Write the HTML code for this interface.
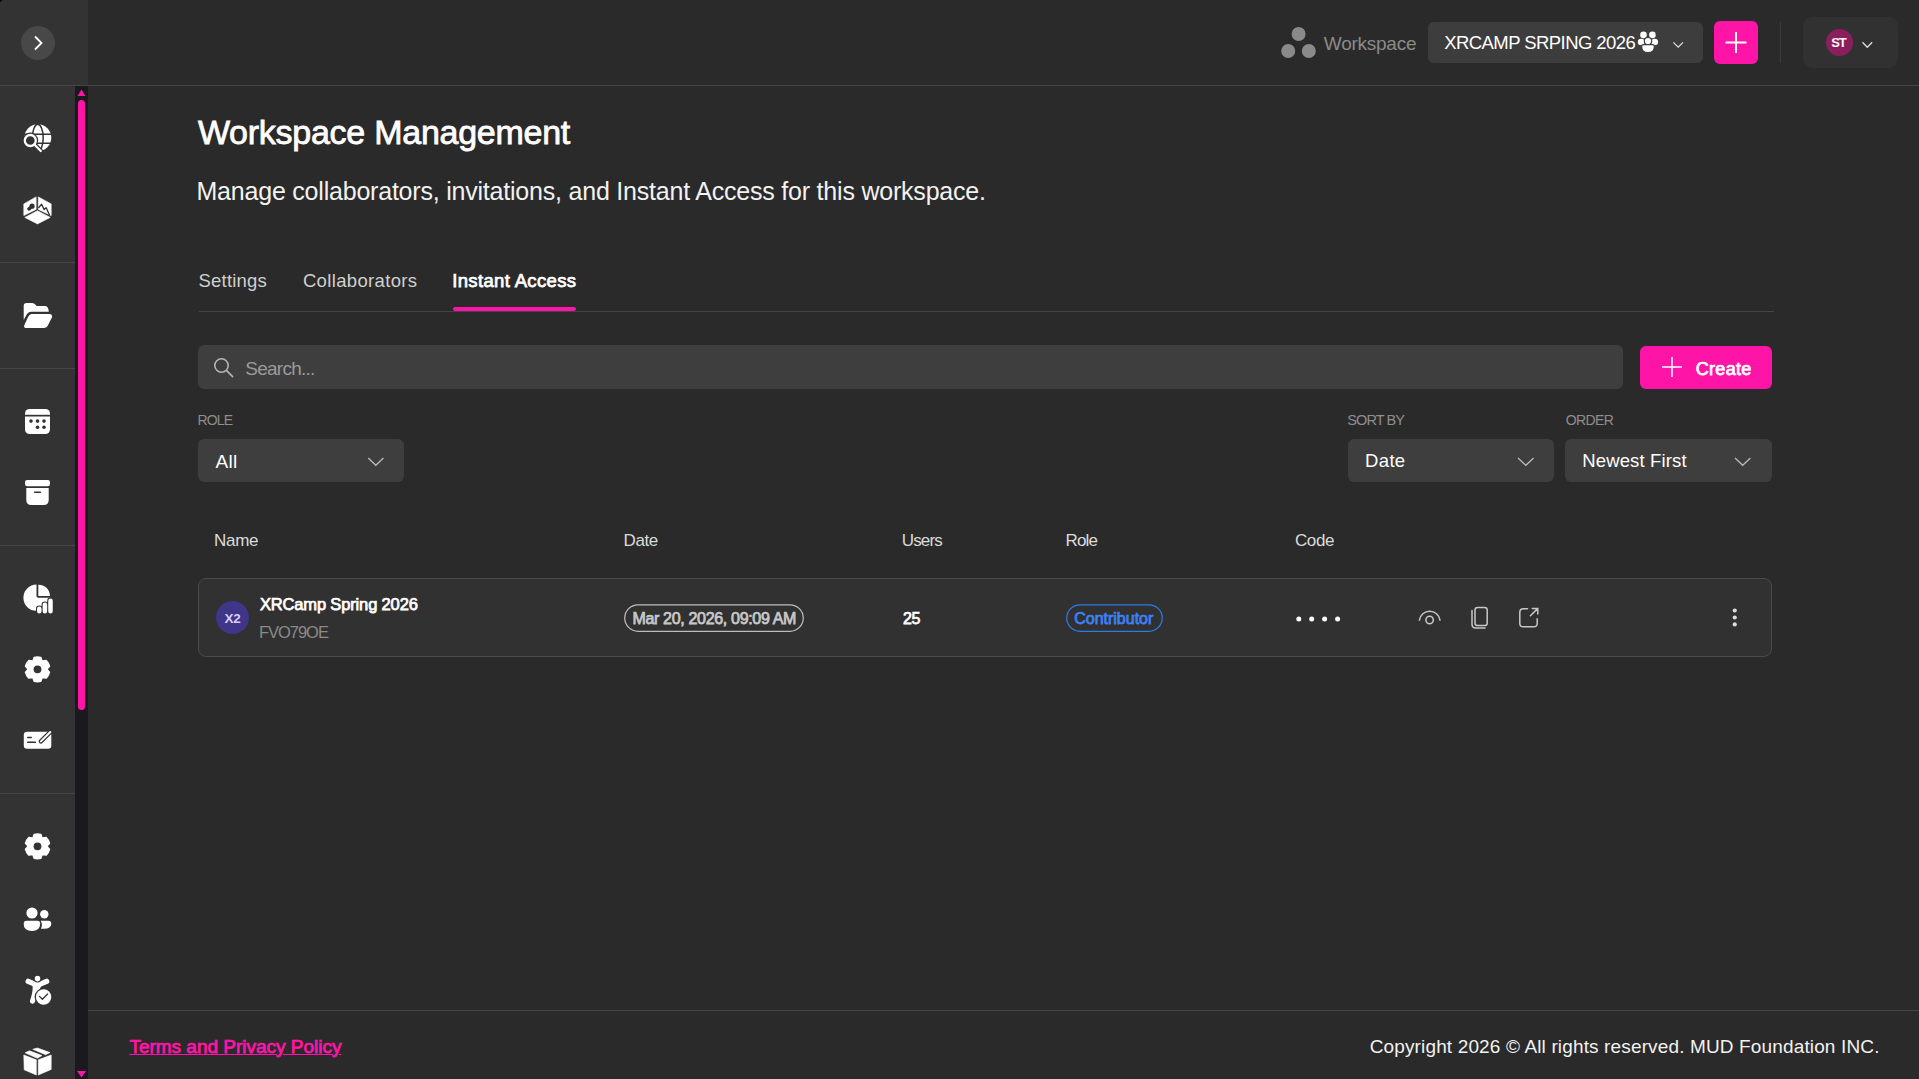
<!DOCTYPE html>
<html><head><meta charset="utf-8">
<style>
*{margin:0;padding:0;box-sizing:border-box}
html,body{width:1919px;height:1079px;overflow:hidden;background:#2a2a2a;font-family:"Liberation Sans",sans-serif;color:#fff}
.a{position:absolute}
.t{position:absolute;white-space:nowrap;line-height:1}
.b{font-weight:700}
</style></head><body>
<!-- sidebar -->
<div class="a" style="left:0;top:0;width:75px;height:1079px;background:#333"></div>
<div class="a" style="left:0;top:0;width:88px;height:85px;background:#333"></div>
<div class="a" style="left:0;top:85px;width:1919px;height:1px;background:#444"></div>
<div class="a" style="left:75px;top:86px;width:13px;height:993px;background:#19191e"></div>
<div class="a" style="left:78px;top:100px;width:7px;height:610px;border-radius:4px;background:#ff14a8"></div>
<svg class="a" style="left:75px;top:86px" width="13" height="993" viewBox="0 0 13 993">
 <path d="M6.5 3.5 L10.5 10 L2.5 10 Z" fill="#ff14a8"/>
 <path d="M2 985 L11 985 L6.5 991.5 Z" fill="#ff14a8"/>
</svg>
<div class="a" style="left:0;top:262px;width:75px;height:1px;background:#464646"></div>
<div class="a" style="left:0;top:368px;width:75px;height:1px;background:#464646"></div>
<div class="a" style="left:0;top:545px;width:75px;height:1px;background:#464646"></div>
<div class="a" style="left:0;top:793px;width:75px;height:1px;background:#464646"></div>
<div class="a" style="left:0;top:0;width:2px;height:1px;background:#000"></div><div class="a" style="left:0;top:0;width:1px;height:2px;background:#000"></div>
<!-- collapse btn -->
<div class="a" style="left:21px;top:26px;width:34px;height:34px;border-radius:50%;background:#484848"></div>
<svg class="a" style="left:21px;top:26px" width="34" height="34"><path d="M14 10.5 L20.5 17 L14 23.5" fill="none" stroke="#fff" stroke-width="1.8"/></svg>

<!-- header right -->
<svg class="a" style="left:1280px;top:26px" width="38" height="34">
 <circle cx="18.6" cy="8" r="7" fill="#8a8a8a"/>
 <circle cx="8.2" cy="25" r="7" fill="#8a8a8a"/>
 <circle cx="28.8" cy="25" r="7" fill="#8a8a8a"/>
</svg>
<div class="a" style="left:1428px;top:22px;width:275px;height:41px;border-radius:6px;background:#3d3d3d"></div>
<div class="a" style="left:1714px;top:21px;width:44px;height:43px;border-radius:6px;background:#ff14a8"></div>
<svg class="a" style="left:1714px;top:21px" width="44" height="43"><path d="M22 11 V32 M11.5 21.5 H32.5" stroke="#fff" stroke-width="2"/></svg>
<div class="a" style="left:1780px;top:22px;width:1px;height:41px;background:#3c3c3c"></div>
<div class="a" style="left:1803px;top:17px;width:95px;height:51px;border-radius:9px;background:#313131"></div>
<div class="a" style="left:1826px;top:29px;width:27px;height:27px;border-radius:50%;background:#8b1f5e"></div>

<!-- title -->

<!-- tabs -->
<div class="a" style="left:199px;top:311px;width:1575px;height:1px;background:#444"></div>
<div class="a" style="left:453px;top:307px;width:123px;height:4px;border-radius:2px;background:#ff14a8"></div>

<!-- search -->
<div class="a" style="left:198px;top:345px;width:1425px;height:44px;border-radius:6px;background:#3e3e3e"></div>
<div class="a" style="left:1640px;top:346px;width:132px;height:43px;border-radius:6px;background:#ff14a8"></div>

<!-- filters -->
<div class="a" style="left:198px;top:439px;width:206px;height:43px;border-radius:6px;background:#3e3e3e"></div>
<div class="a" style="left:1348px;top:439px;width:206px;height:43px;border-radius:6px;background:#3e3e3e"></div>
<div class="a" style="left:1565px;top:439px;width:207px;height:43px;border-radius:6px;background:#3e3e3e"></div>

<!-- table header -->

<!-- row -->
<div class="a" style="left:198px;top:578px;width:1574px;height:79px;border-radius:8px;background:#313131;border:1px solid #4a4a4a"></div>
<div class="a" style="left:216px;top:601px;width:33px;height:33px;border-radius:50%;background:#3f3589"></div>
<svg class="a" style="left:623px;top:603px" width="182" height="30"><rect x="1.75" y="1.75" width="178.5" height="26.5" rx="13.25" fill="none" stroke="#bdbdbd" stroke-width="1.25"/></svg>
<svg class="a" style="left:1065px;top:603px" width="99" height="30"><rect x="1.75" y="1.75" width="95.5" height="26.5" rx="13.25" fill="none" stroke="#2f7ae5" stroke-width="1.25"/></svg>


<!-- sidebar icons -->
<svg class="a" style="left:20px;top:120px" width="36" height="36" viewBox="0 0 36 36">
 <circle cx="17.8" cy="17.8" r="13.5" fill="#fff"/>
 <ellipse cx="17.8" cy="17.8" rx="5.4" ry="13.6" fill="none" stroke="#333" stroke-width="1.5"/>
 <path d="M3 14.3 H33 M3 23.3 H33" stroke="#333" stroke-width="1.5"/>
 <circle cx="10.3" cy="20.5" r="7.9" fill="#333"/>
 <path d="M2 22 L2 36 L20 36 L14.8 25 Z" fill="#333"/>
 <path d="M14.8 25 L21 31.2" stroke="#333" stroke-width="4.6" stroke-linecap="round"/>
 <circle cx="10.3" cy="20.5" r="5.5" fill="none" stroke="#fff" stroke-width="2.3"/>
 <path d="M14.6 24.8 L20.8 31" stroke="#fff" stroke-width="2.3" stroke-linecap="round"/>
</svg>
<svg class="a" style="left:20px;top:192px" width="36" height="36" viewBox="0 0 36 36">
 <path d="M3.8 11.9 L16.1 4.9 V17.4 L3.8 23.6 Z" fill="#fff" stroke="#fff" stroke-width="0.6" stroke-linejoin="round"/>
 <path d="M18.3 4.9 L31.2 11.9 V23.6 L18.3 17.4 Z" fill="#fff" stroke="#fff" stroke-width="0.6" stroke-linejoin="round"/>
 <path d="M4.8 25.4 L17.5 18.8 L30.2 25.4 L17.5 31.9 Z" fill="#fff" stroke="#fff" stroke-width="0.6" stroke-linejoin="round"/>
 <circle cx="12" cy="14.2" r="2.6" fill="#333"/><ellipse cx="9.4" cy="16.6" rx="2.3" ry="1.9" transform="rotate(-30 9.4 16.6)" fill="#333"/>
 <path d="M18.4 16 L21.6 12.2 L24.2 17.6 L26.1 15.6 L29.6 23.3" fill="none" stroke="#333" stroke-width="1.3" stroke-linejoin="round"/>
</svg>
<svg class="a" style="left:20px;top:297px" width="36" height="36" viewBox="0 0 36 36">
 <path d="M3.7 8.8 Q3.7 6 6.6 6 H12.2 Q14 6 15.3 7.6 L16.6 9 H25 Q28.4 9 28.8 14.8 H11.4 Q8.2 14.8 6.6 17.8 L3.7 23 Z" fill="#fff"/>
 <path d="M11.6 16.9 H29.3 Q32.9 16.9 31.9 20.6 L27.6 29 Q26.2 31 24 31 H6.6 Q3 31 4.6 27.4 L8.2 19.8 Q9.5 16.9 11.6 16.9 Z" fill="#fff"/>
</svg>
<svg class="a" style="left:20px;top:403px" width="36" height="36" viewBox="0 0 36 36">
 <rect x="5" y="6" width="25" height="25" rx="4.6" fill="#fff"/>
 <rect x="4" y="11.8" width="27" height="1.7" fill="#333"/>
 <g fill="#333"><circle cx="11" cy="18.1" r="1.8"/><circle cx="17.5" cy="18.1" r="1.8"/><circle cx="24" cy="18.1" r="1.8"/><circle cx="17.5" cy="24.3" r="1.8"/><circle cx="24" cy="24.3" r="1.8"/></g>
</svg>
<svg class="a" style="left:20px;top:474px" width="36" height="36" viewBox="0 0 36 36">
 <rect x="5" y="6" width="25" height="6.2" rx="2.2" fill="#fff"/>
 <path d="M6.3 14 H28.7 V26 Q28.7 31 23.7 31 H11.3 Q6.3 31 6.3 26 Z" fill="#fff"/>
 <path d="M14.6 18.2 H20.4" stroke="#333" stroke-width="1.5" stroke-linecap="round"/>
</svg>
<svg class="a" style="left:20px;top:581px" width="36" height="36" viewBox="0 0 36 36">
 <path d="M16.5 3.6 V15 Q16.5 16.8 18.3 16.8 H29.6 A13.1 13.1 0 1 1 16.5 3.6 Z" fill="#fff"/>
 <path d="M18.3 3.7 A11.3 11.3 0 0 1 29.9 14.9 H18.3 Z" fill="#fff"/>
 <g stroke="#333" stroke-width="6.6" stroke-linecap="round"><path d="M19.3 27.8 V30.3 M24.9 23.8 V30.3 M30.5 19.8 V30.3"/></g>
 <g stroke="#fff" stroke-width="4.5" stroke-linecap="round"><path d="M19.3 27.8 V30.3 M24.9 23.8 V30.3 M30.5 19.8 V30.3"/></g>
</svg>
<svg class="a" style="left:20px;top:651px" width="36" height="36" viewBox="0 0 36 36">
 <path d="M21.90 9.66 L20.79 6.45 A12.3 12.3 0 0 0 14.21 6.45 L13.10 9.66 A9.7 9.7 0 0 0 12.22 10.16 L8.88 9.53 A12.3 12.3 0 0 0 5.59 15.22 L7.81 17.79 A9.7 9.7 0 0 0 7.81 18.81 L5.59 21.38 A12.3 12.3 0 0 0 8.88 27.07 L12.22 26.44 A9.7 9.7 0 0 0 13.10 26.94 L14.21 30.15 A12.3 12.3 0 0 0 20.79 30.15 L21.90 26.94 A9.7 9.7 0 0 0 22.78 26.44 L26.12 27.07 A12.3 12.3 0 0 0 29.41 21.38 L27.19 18.81 A9.7 9.7 0 0 0 27.19 17.79 L29.41 15.22 A12.3 12.3 0 0 0 26.12 9.53 L22.78 10.16 A9.7 9.7 0 0 0 21.90 9.66Z" fill="#fff" stroke="#fff" stroke-width="1.6" stroke-linejoin="round"/>
 <circle cx="17.5" cy="18.3" r="3.9" fill="#333"/>
</svg>
<svg class="a" style="left:20px;top:722px" width="36" height="36" viewBox="0 0 36 36">
 <rect x="3.8" y="9.7" width="27.5" height="17" rx="3.2" fill="#fff"/>
 <path d="M7.7 15.5 H11.3 M7.7 20.3 H15.3" stroke="#333" stroke-width="1.5" stroke-linecap="round"/>
 <path d="M20.9 19.4 L30.3 10" stroke="#333" stroke-width="4.4" stroke-linecap="round"/>
 <path d="M20.9 19.4 L30.3 10" stroke="#fff" stroke-width="2" stroke-linecap="round"/>
</svg>
<svg class="a" style="left:20px;top:828px" width="36" height="36" viewBox="0 0 36 36">
 <path d="M21.90 9.66 L20.79 6.45 A12.3 12.3 0 0 0 14.21 6.45 L13.10 9.66 A9.7 9.7 0 0 0 12.22 10.16 L8.88 9.53 A12.3 12.3 0 0 0 5.59 15.22 L7.81 17.79 A9.7 9.7 0 0 0 7.81 18.81 L5.59 21.38 A12.3 12.3 0 0 0 8.88 27.07 L12.22 26.44 A9.7 9.7 0 0 0 13.10 26.94 L14.21 30.15 A12.3 12.3 0 0 0 20.79 30.15 L21.90 26.94 A9.7 9.7 0 0 0 22.78 26.44 L26.12 27.07 A12.3 12.3 0 0 0 29.41 21.38 L27.19 18.81 A9.7 9.7 0 0 0 27.19 17.79 L29.41 15.22 A12.3 12.3 0 0 0 26.12 9.53 L22.78 10.16 A9.7 9.7 0 0 0 21.90 9.66Z" fill="#fff" stroke="#fff" stroke-width="1.6" stroke-linejoin="round"/>
 <circle cx="17.5" cy="18.3" r="3.9" fill="#333"/>
</svg>
<svg class="a" style="left:20px;top:901px" width="36" height="36" viewBox="0 0 36 36">
 <circle cx="12" cy="12" r="5.6" fill="#fff"/>
 <circle cx="24.3" cy="13.3" r="4.2" fill="#fff"/>
 <path d="M6.5 19.8 H17.3 Q20.2 19.8 20.2 22.8 Q20 30 12 30 Q3.7 30 3.7 23 Q3.7 19.8 6.5 19.8 Z" fill="#fff"/>
 <path d="M20.6 19.8 H28.3 Q31.3 19.8 31.3 23 Q31 27.7 24 27.7 H20.9 Q22 25.5 21.9 23.2 Q21.6 21 20.6 19.8 Z" fill="#fff"/>
</svg>
<svg class="a" style="left:20px;top:972px" width="36" height="36" viewBox="0 0 36 36">
 <path d="M8.2 9.4 Q13.5 11.8 17.5 12.8 Q21.5 11.8 26.6 9.4" fill="none" stroke="#fff" stroke-width="5.4" stroke-linecap="round" stroke-linejoin="round"/>
 <path d="M15.2 13 Q15.8 20 12.6 29" fill="none" stroke="#fff" stroke-width="5.2" stroke-linecap="round"/>
 <path d="M12.5 12 H22.5 L18 20 Z" fill="#fff"/>
 <circle cx="17.5" cy="6.6" r="3.4" fill="#fff" stroke="#333" stroke-width="1.2"/>
 <circle cx="23.6" cy="25" r="9" fill="#333"/>
 <circle cx="23.6" cy="25" r="7.7" fill="#fff"/>
 <path d="M19.5 24.4 L22.4 27.3 L27.6 22" fill="none" stroke="#333" stroke-width="1.3" stroke-linecap="round" stroke-linejoin="round"/>
</svg>
<svg class="a" style="left:20px;top:1043px" width="36" height="36" viewBox="0 0 36 36">
 <path d="M3.8 12 L16.3 16.8 V32 L4.2 26.8 Z" fill="#fff" stroke="#fff" stroke-width="0.6" stroke-linejoin="round"/>
 <path d="M18.3 16.8 L31.2 12 V26.4 L18.3 32 Z" fill="#fff" stroke="#fff" stroke-width="0.6" stroke-linejoin="round"/>
 <path d="M5 9.8 L9.6 7.8 L22 12.6 L17.4 15.2 Z" fill="#fff" stroke="#fff" stroke-width="0.6" stroke-linejoin="round"/>
 <path d="M12.8 6.3 L17.5 5 L30 9.6 L25.6 11.7 Z" fill="#fff" stroke="#fff" stroke-width="0.6" stroke-linejoin="round"/>
</svg>

<!-- header extras -->
<svg class="a" style="left:1630px;top:25px" width="60" height="35" viewBox="0 0 60 35">
 <circle cx="13.5" cy="9.9" r="3.3" fill="#fff"/>
 <circle cx="22.4" cy="9.9" r="3.3" fill="#fff"/>
 <ellipse cx="11.2" cy="17" rx="3.4" ry="3.2" fill="#fff"/>
 <ellipse cx="24.7" cy="17" rx="3.4" ry="3.2" fill="#fff"/>
 <circle cx="18" cy="16.1" r="3.7" fill="#fff" stroke="#3d3d3d" stroke-width="1.2"/>
 <path d="M11.6 21.4 Q11.6 19.6 13.6 19.6 H22.4 Q24.4 19.6 24.4 21.4 Q24.2 27.6 18 27.6 Q11.8 27.6 11.6 21.4 Z" fill="#fff" stroke="#3d3d3d" stroke-width="1.2"/>
 <path d="M43.4 17.4 L48.2 22.2 L53 17.4" fill="none" stroke="#ddd" stroke-width="1.3"/>
</svg>
<svg class="a" style="left:1855px;top:35px" width="25" height="20"><path d="M7.5 7.3 L12.3 12.3 L17.2 7.3" fill="none" stroke="#ddd" stroke-width="1.3"/></svg>

<!-- search icon, plus, chevrons -->
<svg class="a" style="left:205px;top:350px" width="40" height="35">
 <circle cx="16.5" cy="15.5" r="6.7" fill="none" stroke="#b4b4b4" stroke-width="1.6"/>
 <path d="M21.4 20.4 L27.6 26.6" stroke="#b4b4b4" stroke-width="1.6" stroke-linecap="round"/>
</svg>
<svg class="a" style="left:1650px;top:350px" width="40" height="35"><path d="M22 7 V27 M12 17 H32" stroke="#fff" stroke-width="1.5"/></svg>
<svg class="a" style="left:360px;top:450px" width="30" height="25"><path d="M8.2 8 L15.8 15.3 L23.4 8" fill="none" stroke="#bdbdbd" stroke-width="1.25"/></svg>
<svg class="a" style="left:1510px;top:450px" width="30" height="25"><path d="M8 8 L15.8 15.3 L23.6 8" fill="none" stroke="#bdbdbd" stroke-width="1.25"/></svg>
<svg class="a" style="left:1727px;top:450px" width="30" height="25"><path d="M8 8 L15.7 15.3 L23.4 8" fill="none" stroke="#bdbdbd" stroke-width="1.25"/></svg>

<!-- row extras -->
<svg class="a" style="left:1290px;top:610px" width="56" height="18" fill="#fff">
 <circle cx="8.8" cy="8.9" r="2.5"/><circle cx="21.7" cy="8.9" r="2.5"/><circle cx="34.6" cy="8.9" r="2.5"/><circle cx="47.6" cy="8.9" r="2.5"/>
</svg>
<svg class="a" style="left:1410px;top:600px" width="140" height="36" fill="none" stroke="#c8c8c8" stroke-width="1.5">
 <path d="M9.4 20.2 A10.4 10.4 0 0 1 30 20.2" stroke-linecap="round"/>
 <circle cx="19.6" cy="20" r="3.7"/>
 <rect x="65" y="7.45" width="12.2" height="18.05" rx="2.6"/>
 <path d="M62 10.5 V24.3 Q62 28 65.7 28 H75" stroke-linecap="round"/>
 <path d="M117.5 8.7 H113.4 Q109.8 8.7 109.8 12.3 V23.2 Q109.8 26.8 113.4 26.8 H123.6 Q127.2 26.8 127.2 23.2 V18.7" stroke-linecap="round"/>
 <path d="M120.4 15.8 L127.8 8.4 M122.3 8.4 H127.8 V13.9" stroke-linecap="round" stroke-linejoin="round"/>
</svg>
<svg class="a" style="left:1725px;top:600px" width="20" height="36" fill="#ddd">
 <circle cx="9.75" cy="10.5" r="2.1"/><circle cx="9.75" cy="17.5" r="2.1"/><circle cx="9.75" cy="24.4" r="2.1"/>
</svg>

<!-- footer -->
<div class="a" style="left:88px;top:1010px;width:1831px;height:1px;background:#444"></div>
<!-- TEXTS -->
<div class="t" style="left:1323.8px;top:33.9px;font-size:19.0px;letter-spacing:-0.25px;color:#8a8a8a;">Workspace</div>
<div class="t" style="left:1444.2px;top:34.1px;font-size:18.5px;letter-spacing:-0.56px;color:#ffffff;">XRCAMP SRPING 2026</div>
<div class="t b" style="left:1831.3px;top:36.0px;font-size:13px;letter-spacing:-1.3px;color:#ffffff;">ST</div>
<div class="t" style="left:197.9px;top:114.9px;font-size:34px;letter-spacing:-0.26px;color:#ffffff;-webkit-text-stroke:0.8px #fff">Workspace Management</div>
<div class="t" style="left:196.5px;top:179.4px;font-size:25.0px;letter-spacing:-0.21px;color:#f2f2f2;">Manage collaborators, invitations, and Instant Access for this workspace.</div>
<div class="t" style="left:198.6px;top:272.4px;font-size:18.5px;letter-spacing:0.19px;color:#d0d0d0;">Settings</div>
<div class="t" style="left:302.9px;top:272.4px;font-size:18.5px;letter-spacing:0.35px;color:#d0d0d0;">Collaborators</div>
<div class="t" style="left:452.2px;top:272.4px;font-size:18.5px;letter-spacing:0.35px;color:#ffffff;-webkit-text-stroke:0.75px #ffffff;">Instant Access</div>
<div class="t" style="left:245.3px;top:358.8px;font-size:19.0px;letter-spacing:-0.75px;color:#9a9a9a;">Search...</div>
<div class="t" style="left:1695.8px;top:359.9px;font-size:18.0px;letter-spacing:0.28px;color:#ffffff;-webkit-text-stroke:0.75px #ffffff;">Create</div>
<div class="t" style="left:197.4px;top:413.2px;font-size:14.0px;letter-spacing:-0.83px;color:#8e8e8e;">ROLE</div>
<div class="t" style="left:1347.3px;top:412.7px;font-size:14.5px;letter-spacing:-0.92px;color:#8e8e8e;">SORT BY</div>
<div class="t" style="left:1565.8px;top:413.1px;font-size:14.0px;letter-spacing:-0.65px;color:#8e8e8e;">ORDER</div>
<div class="t" style="left:215.4px;top:451.9px;font-size:19.0px;letter-spacing:0.40px;color:#ffffff;">All</div>
<div class="t" style="left:1365.1px;top:452.3px;font-size:18.5px;letter-spacing:0.33px;color:#ffffff;">Date</div>
<div class="t" style="left:1582.2px;top:452.3px;font-size:18.5px;letter-spacing:0.15px;color:#ffffff;">Newest First</div>
<div class="t" style="left:214.1px;top:531.8px;font-size:17.0px;letter-spacing:-0.30px;color:#dcdcdc;">Name</div>
<div class="t" style="left:623.6px;top:532.0px;font-size:17.0px;letter-spacing:-0.40px;color:#dcdcdc;">Date</div>
<div class="t" style="left:901.8px;top:532.0px;font-size:17.0px;letter-spacing:-0.88px;color:#dcdcdc;">Users</div>
<div class="t" style="left:1065.6px;top:532.0px;font-size:17.0px;letter-spacing:-0.87px;color:#dcdcdc;">Role</div>
<div class="t" style="left:1294.9px;top:532.0px;font-size:17.0px;letter-spacing:-0.37px;color:#dcdcdc;">Code</div>
<div class="t" style="left:259.9px;top:595.6px;font-size:16.5px;letter-spacing:-0.15px;color:#ffffff;-webkit-text-stroke:0.75px #ffffff;">XRCamp Spring 2026</div>
<div class="t" style="left:259.0px;top:624.2px;font-size:16.5px;letter-spacing:-1.03px;color:#8a8a8a;">FVO79OE</div>
<div class="t" style="left:632.4px;top:610.9px;font-size:16.0px;letter-spacing:-0.32px;color:#c8c8c8;-webkit-text-stroke:0.75px #c8c8c8;">Mar 20, 2026, 09:09 AM</div>
<div class="t" style="left:902.9px;top:610.9px;font-size:16.0px;letter-spacing:-0.30px;color:#ffffff;-webkit-text-stroke:0.75px #ffffff;">25</div>
<div class="t" style="left:1074.2px;top:610.7px;font-size:16.0px;letter-spacing:0.00px;color:#3b82f6;-webkit-text-stroke:0.75px #3b82f6;">Contributor</div>
<div class="t b" style="left:224.6px;top:611.8px;font-size:13.5px;letter-spacing:-0.40px;color:#d9cdfc;">X2</div>
<div class="t" style="left:129.4px;top:1036.7px;font-size:19.0px;letter-spacing:-0.01px;color:#ff14a8;-webkit-text-stroke:0.75px #ff14a8;text-decoration:underline;">Terms and Privacy Policy</div>
<div class="t" style="left:1369.7px;top:1037.1px;font-size:19.0px;letter-spacing:0.14px;color:#f2f2f2;">Copyright 2026 © All rights reserved. MUD Foundation INC.</div>
<!-- /TEXTS -->
</body></html>
